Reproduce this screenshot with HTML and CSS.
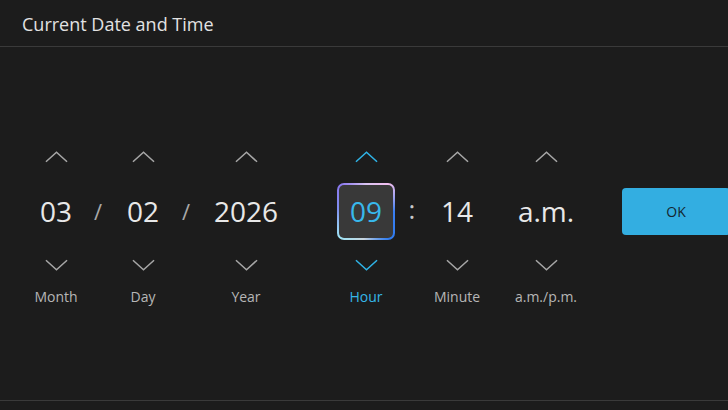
FILE: index.html
```html
<!DOCTYPE html>
<html lang="en">
<head>
    <meta charset="UTF-8">
    <meta name="viewport" content="width=device-width, initial-scale=1.0">
    <title>Current Date and Time</title>
    <link rel="stylesheet" href="styles.css">
</head>
<body>
    <header class="title-bar">Current Date and Time</header>

    <main class="picker">
        <div class="picker-row">
            <div class="field field-month">
                <button class="arrow"><svg viewBox="0 0 24 12"><polyline points="1,11 12,1 23,11"/></svg></button>
                <div class="value">03</div>
                <button class="arrow"><svg viewBox="0 0 24 12"><polyline points="1,1 12,11 23,1"/></svg></button>
                <div class="label">Month</div>
            </div>
            <div class="sep sep-slash1">/</div>
            <div class="field field-day">
                <button class="arrow"><svg viewBox="0 0 24 12"><polyline points="1,11 12,1 23,11"/></svg></button>
                <div class="value">02</div>
                <button class="arrow"><svg viewBox="0 0 24 12"><polyline points="1,1 12,11 23,1"/></svg></button>
                <div class="label">Day</div>
            </div>
            <div class="sep sep-slash2">/</div>
            <div class="field field-year">
                <button class="arrow"><svg viewBox="0 0 24 12"><polyline points="1,11 12,1 23,11"/></svg></button>
                <div class="value">2026</div>
                <button class="arrow"><svg viewBox="0 0 24 12"><polyline points="1,1 12,11 23,1"/></svg></button>
                <div class="label">Year</div>
            </div>
            <div class="field field-hour active">
                <button class="arrow"><svg viewBox="0 0 24 12"><polyline points="1,11 12,1 23,11"/></svg></button>
                <div class="value"><span class="focus-box">09</span></div>
                <button class="arrow"><svg viewBox="0 0 24 12"><polyline points="1,1 12,11 23,1"/></svg></button>
                <div class="label">Hour</div>
            </div>
            <div class="sep sep-colon">:</div>
            <div class="field field-minute">
                <button class="arrow"><svg viewBox="0 0 24 12"><polyline points="1,11 12,1 23,11"/></svg></button>
                <div class="value">14</div>
                <button class="arrow"><svg viewBox="0 0 24 12"><polyline points="1,1 12,11 23,1"/></svg></button>
                <div class="label">Minute</div>
            </div>
            <div class="field field-ampm">
                <button class="arrow"><svg viewBox="0 0 24 12"><polyline points="1,11 12,1 23,11"/></svg></button>
                <div class="value">a.m.</div>
                <button class="arrow"><svg viewBox="0 0 24 12"><polyline points="1,1 12,11 23,1"/></svg></button>
                <div class="label">a.m./p.m.</div>
            </div>
            <div class="ok-wrap">
                <button class="ok-btn">OK</button>
            </div>
        </div>
    </main>
</body>
</html>
```

FILE: styles.css
```css
html, body {
    margin: 0;
    padding: 0;
    height: 100%;
}
body {
    background-color: #1c1c1c;
    color: #e6e6e6;
    font-family: "Open Sans", "DejaVu Sans", sans-serif;
    overflow: hidden;
}
.title-bar {
    height: 46px;
    line-height: 48px;
    padding: 0 22px;
    font-size: 18px;
    color: #e2e2e2;
    border-bottom: 1px solid #3a3a3a;
    box-sizing: content-box;
    overflow: hidden;
}
.picker {
    height: 354px;
    padding-top: 99px;
    box-sizing: border-box;
    border-bottom: 1px solid #3a3a3a;
}
.picker-row {
    display: flex;
    align-items: flex-start;
    padding-left: 26px;
}
.field {
    display: flex;
    flex-direction: column;
    align-items: center;
    flex: none;
}
.field-month { width: 60px; }
.field-day { width: 66px; }
.field-year { width: 100px; margin-right: 40px; }
.field-hour { width: 60px; }
.field-minute { width: 58px; margin-right: 30px; }
.field-ampm { width: 60px; margin-right: 46px; }
.arrow {
    width: 24px;
    height: 22px;
    padding: 0;
    border: none;
    background: none;
    display: flex;
    align-items: center;
    justify-content: center;
    cursor: pointer;
}
.arrow svg {
    width: 23px;
    height: 12px;
    fill: none;
    stroke: #a6a6a6;
    stroke-width: 1.6;
}
.value {
    height: 58px;
    margin: 14px 0;
    display: flex;
    align-items: center;
    justify-content: center;
    font-size: 28px;
    color: #e8e8e8;
    white-space: nowrap;
}
.label {
    margin-top: 12px;
    font-size: 14px;
    line-height: 18px;
    color: #b6b6b6;
    white-space: nowrap;
}
.sep {
    flex: none;
    height: 58px;
    margin-top: 36px;
    display: flex;
    align-items: center;
    justify-content: center;
    color: #a8a8a8;
}
.sep-slash1 { width: 24px; font-size: 22px; }
.sep-slash2 { width: 20px; font-size: 22px; }
.sep-colon { width: 32px; font-size: 26px; color: #c8c8c8; padding-bottom: 4px; box-sizing: border-box; }
.active .arrow svg {
    stroke: #2fb3e6;
}
.active .label {
    color: #35b6e8;
}
.focus-box {
    width: 58px;
    height: 57px;
    box-sizing: border-box;
    display: flex;
    align-items: center;
    justify-content: center;
    color: #38b8ec;
    border: 2px solid transparent;
    border-radius: 7px;
    background:
        linear-gradient(#393939, #393939) padding-box,
        conic-gradient(from 0deg, #d9c4f2 0deg, #f2bff0 40deg, #3a7ff2 90deg, #2f7cf0 140deg, #c8d4de 185deg, #9fe4f6 225deg, #7f8ff0 275deg, #8a78f0 315deg, #d9c4f2 360deg) border-box;
}
.ok-wrap {
    height: 58px;
    margin-top: 36px;
    display: flex;
    align-items: center;
}
.ok-btn {
    width: 108px;
    height: 47px;
    border: none;
    border-radius: 4px;
    background-color: #33aee1;
    color: #142630;
    font-family: "Open Sans", "DejaVu Sans", sans-serif;
    font-size: 14px;
    cursor: pointer;
}
```
